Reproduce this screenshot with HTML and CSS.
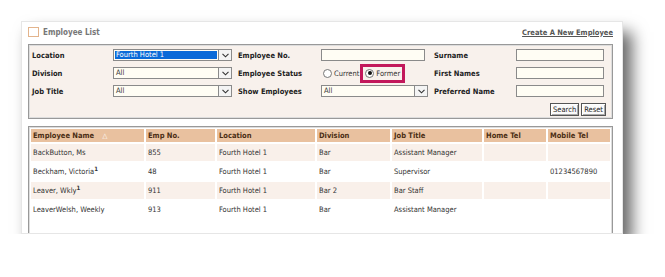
FILE: index.html
```html
<!DOCTYPE html>
<html lang="en">
<head>
    <meta charset="UTF-8">
    <meta name="viewport" content="width=device-width, initial-scale=1.0">
    <title>Employee List</title>
    <link rel="stylesheet" href="styles.css">
</head>
<body>
    <div class="card">
        <!-- Title bar -->
        <div class="title-bar">
            <div class="title">
                <span class="title-box"></span>
                <span>Employee List</span>
            </div>
            <a href="#" class="create-link">Create A New Employee</a>
        </div>

        <!-- Search filters -->
        <div class="filters">
            <label class="lbl">Location</label>
            <div class="select active">
                <span class="select-value">Fourth Hotel 1</span>
                <span class="select-arrow"><svg width="7" height="5" viewBox="0 0 7 5"><path d="M0.5 0.8 L3.5 3.8 L6.5 0.8" fill="none" stroke="#333" stroke-width="1.1"/></svg></span>
            </div>
            <label class="lbl lbl-pad">Employee No.</label>
            <div class="field"><span class="input w-104"></span></div>
            <label class="lbl lbl-pad">Surname</label>
            <div class="field"><span class="input"></span></div>

            <label class="lbl">Division</label>
            <div class="select">
                <span class="select-value">All</span>
                <span class="select-arrow"><svg width="7" height="5" viewBox="0 0 7 5"><path d="M0.5 0.8 L3.5 3.8 L6.5 0.8" fill="none" stroke="#333" stroke-width="1.1"/></svg></span>
            </div>
            <label class="lbl lbl-pad">Employee Status</label>
            <div class="field radios">
                <span class="radio-opt"><span class="radio"></span>Current</span>
                <span class="radio-opt marked"><span class="radio checked"></span>Former</span>
            </div>
            <label class="lbl lbl-pad">First Names</label>
            <div class="field"><span class="input"></span></div>

            <label class="lbl">Job Title</label>
            <div class="select">
                <span class="select-value">All</span>
                <span class="select-arrow"><svg width="7" height="5" viewBox="0 0 7 5"><path d="M0.5 0.8 L3.5 3.8 L6.5 0.8" fill="none" stroke="#333" stroke-width="1.1"/></svg></span>
            </div>
            <label class="lbl lbl-pad">Show Employees</label>
            <div class="select">
                <span class="select-value">All</span>
                <span class="select-arrow"><svg width="7" height="5" viewBox="0 0 7 5"><path d="M0.5 0.8 L3.5 3.8 L6.5 0.8" fill="none" stroke="#333" stroke-width="1.1"/></svg></span>
            </div>
            <label class="lbl lbl-pad">Preferred Name</label>
            <div class="field"><span class="input"></span></div>

            <div class="buttons">
                <span class="btn">Search</span>
                <span class="btn">Reset</span>
            </div>
        </div>

        <!-- Results -->
        <div class="results">
            <table>
                <colgroup>
                    <col style="width: 113px">
                    <col style="width: 69px">
                    <col style="width: 98px">
                    <col style="width: 73px">
                    <col style="width: 90px">
                    <col style="width: 62px">
                    <col style="width: 62px">
                </colgroup>
                <thead>
                    <tr>
                        <th>Employee Name <span class="sort">&#9651;</span></th>
                        <th>Emp No.</th>
                        <th>Location</th>
                        <th>Division</th>
                        <th>Job Title</th>
                        <th>Home Tel</th>
                        <th>Mobile Tel</th>
                    </tr>
                </thead>
                <tbody>
                    <tr>
                        <td>BackButton, Ms</td>
                        <td>855</td>
                        <td>Fourth Hotel 1</td>
                        <td>Bar</td>
                        <td>Assistant Manager</td>
                        <td></td>
                        <td></td>
                    </tr>
                    <tr>
                        <td>Beckham, Victoria<sup>1</sup></td>
                        <td>48</td>
                        <td>Fourth Hotel 1</td>
                        <td>Bar</td>
                        <td>Supervisor</td>
                        <td></td>
                        <td>01234567890</td>
                    </tr>
                    <tr>
                        <td>Leaver, Wkly<sup>1</sup></td>
                        <td>911</td>
                        <td>Fourth Hotel 1</td>
                        <td>Bar 2</td>
                        <td>Bar Staff</td>
                        <td></td>
                        <td></td>
                    </tr>
                    <tr>
                        <td>LeaverWelsh, Weekly</td>
                        <td>913</td>
                        <td>Fourth Hotel 1</td>
                        <td>Bar</td>
                        <td>Assistant Manager</td>
                        <td></td>
                        <td></td>
                    </tr>
                </tbody>
            </table>
        </div>
    </div>
</body>
</html>
```

FILE: styles.css
```css
body {
    margin: 0;
    padding: 21px 0 0 21px;
    background-color: white;
    font-family: "DejaVu Sans Condensed", "DejaVu Sans", sans-serif;
    font-size: 7.5px;
    color: #333;
}

.card {
    width: 602px;
    height: 213px;
    box-sizing: border-box;
    background: white;
    border: 1px solid #e6e6e6;
    box-shadow: 9px 11px 15px rgba(0, 0, 0, 0.6);
    overflow: hidden;
}

.title-bar {
    display: flex;
    justify-content: space-between;
    align-items: center;
    height: 20px;
    margin: 0 9px 2px 6px;
}

.title {
    display: flex;
    align-items: center;
    gap: 4px;
    color: #777;
    font-weight: bold;
    font-size: 8px;
}

.title-box {
    width: 9px;
    height: 8px;
    border: 1px solid #e3b48c;
}

.create-link {
    color: #555;
    font-weight: bold;
    text-decoration: underline;
}

.filters {
    display: grid;
    grid-template-columns: 81px 119px 89px 107px 88px 88px;
    grid-template-rows: repeat(4, 18px);
    align-items: center;
    height: 75px;
    box-sizing: border-box;
    margin: 0 9px 0 6px;
    padding: 1px 0 0 3px;
    background-color: #f8f1ec;
    border: 1px solid #999;
    box-shadow: inset 0 0 0 1px #ddd;
}

.lbl {
    font-weight: bold;
    color: #222;
    white-space: nowrap;
}

.lbl-pad {
    padding-left: 6px;
}

.select {
    display: flex;
    height: 12px;
    box-sizing: border-box;
    border: 1px solid #8a8a8a;
    background-color: #fffdf4;
}

.select-value {
    flex: 1;
    padding-left: 2px;
    line-height: 10px;
    color: #333;
}

.select.active .select-value {
    margin: 1px;
    padding-left: 1px;
    line-height: 8px;
    background-color: #0a6ad8;
    color: white;
}

.select-arrow {
    display: flex;
    align-items: center;
    justify-content: center;
    width: 12px;
    border-left: 1px solid #8a8a8a;
    background-color: #f4f4f4;
}

.field {
    display: flex;
    align-items: center;
}

.input {
    display: block;
    width: 88px;
    height: 12px;
    box-sizing: border-box;
    border: 1px solid #8a8a8a;
    background-color: #fffdf4;
}

.input.w-104 {
    width: 104px;
}

.radios {
    gap: 6px;
    padding-left: 2px;
}

.radio-opt {
    display: flex;
    align-items: center;
    gap: 2px;
    color: #333;
}

.radio-opt.marked {
    outline: 3px solid #c2185b;
    outline-offset: 2px;
}

.radio {
    display: flex;
    align-items: center;
    justify-content: center;
    width: 9px;
    height: 9px;
    box-sizing: border-box;
    border: 1px solid #777;
    border-radius: 50%;
    background: white;
}

.radio.checked::after {
    content: "";
    width: 4px;
    height: 4px;
    border-radius: 50%;
    background-color: #111;
}

.buttons {
    grid-column: 1 / -1;
    justify-self: end;
    display: flex;
    gap: 2px;
    margin-right: -2px;
}

.btn {
    display: block;
    height: 13px;
    box-sizing: border-box;
    padding: 0 2px;
    line-height: 11px;
    border: 1px solid #555;
    box-shadow: inset 1px 1px 0 white, inset -1px -1px 0 #aaa;
    background-color: #fafafa;
    color: #222;
}

.results {
    height: 120px;
    margin: 7px 9px 0 6px;
    border: 1px solid #999;
    box-shadow: inset 0 0 0 1px #ddd;
}

table {
    width: 100%;
    table-layout: fixed;
    border-spacing: 2px;
}

th, td {
    padding: 0 2px;
    text-align: left;
    white-space: nowrap;
    overflow: hidden;
}

th {
    height: 13px;
    background-color: #e9c19f;
    color: #4b2e14;
    font-weight: bold;
}

td {
    height: 17px;
    color: #333;
}

tbody tr:nth-child(odd) td {
    background-color: #f9f0ea;
}

.sort {
    margin-left: 6px;
    color: #fff;
    font-size: 7px;
}

sup {
    font-size: 6px;
    font-weight: bold;
    line-height: 0;
}
```
